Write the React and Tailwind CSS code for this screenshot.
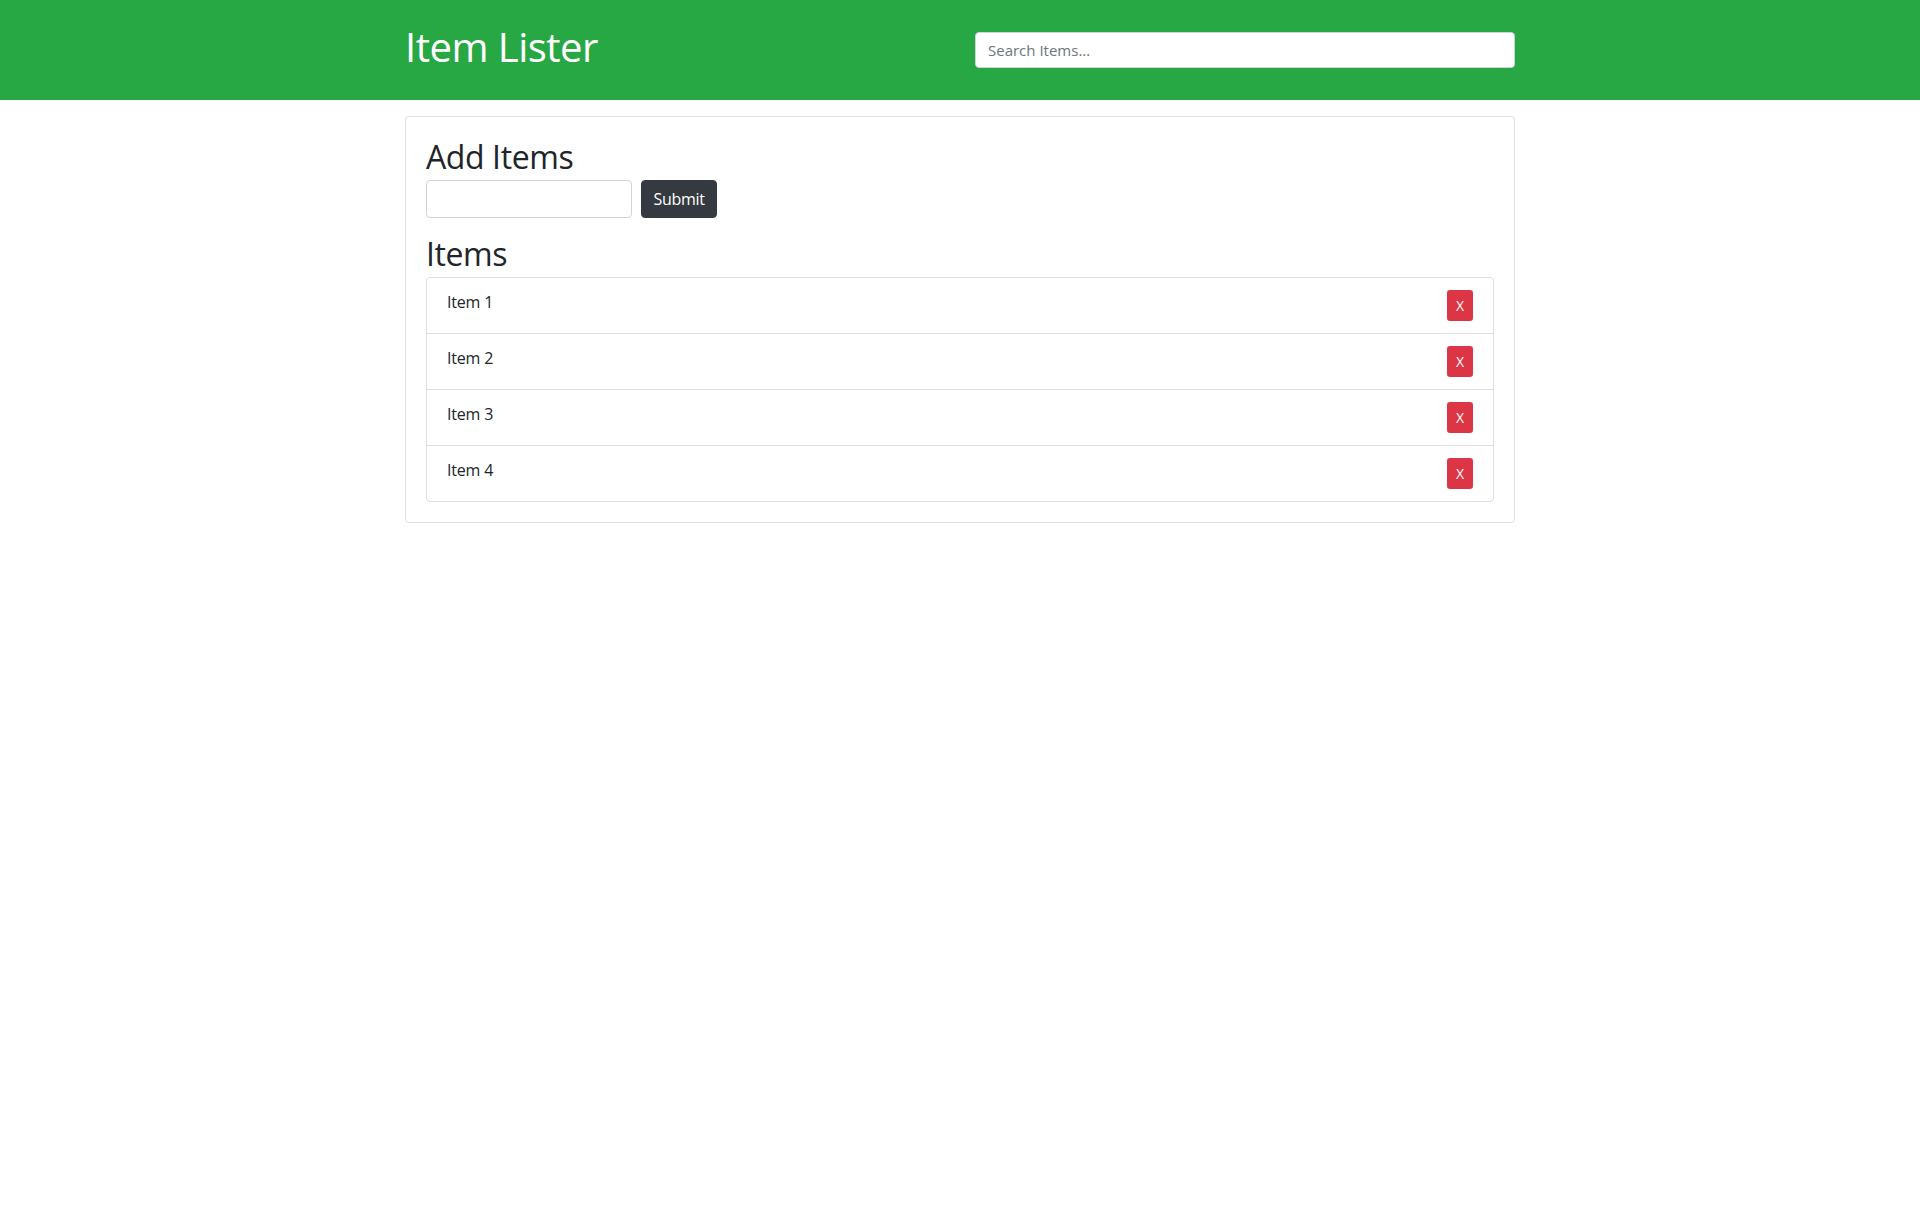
import React from "react";

const items = ["Item 1", "Item 2", "Item 3", "Item 4"];

export default function App() {
  return (
    <div className="min-h-screen bg-white text-[#212529] font-['Open_Sans',_'Noto_Sans',_sans-serif]">
      <header className="bg-[#28a745] text-white h-[100px] mb-4">
        <div className="mx-auto max-w-[1140px] px-[15px] h-full">
          <div className="grid grid-cols-2 gap-[30px] items-center h-full">
            <h1 className="text-[40px] leading-[48px] pb-[6px] font-medium tracking-[-0.5px]">Item Lister</h1>
            <div>
              <input
                type="text"
                placeholder="Search Items..."
                className="block w-full h-[36px] px-3 text-[15px] bg-white text-[#495057] border border-[#ced4da] rounded-[4px] placeholder:text-[#6c757d] outline-none"
              />
            </div>
          </div>
        </div>
      </header>
      <div className="mx-auto max-w-[1140px] px-[15px]">
        <div className="border border-[#dfdfdf] rounded-[4px] px-5 pt-[21px] pb-5">
          <h2 className="text-[32px] leading-[38px] font-medium mb-[4px] tracking-[-0.4px]">Add Items</h2>
          <form className="flex items-center gap-[9px] mb-4" onSubmit={(e) => e.preventDefault()}>
            <input
              type="text"
              className="w-[206px] h-[38px] px-3 text-base border border-[#ced4da] rounded-[4px] outline-none"
            />
            <button
              type="submit"
              className="w-[76px] h-[38px] bg-[#343a40] border border-[#343a40] text-white text-base rounded-[4px] tracking-[-0.3px]"
            >
              Submit
            </button>
          </form>
          <h2 className="text-[32px] leading-[38px] font-medium pt-[1px] mb-[4px] tracking-[-0.4px]">Items</h2>
          <ul className="border border-[#dfdfdf] rounded-[4px]">
            {items.map((it, i) => (
              <li
                key={it}
                className={
                  "flex items-start justify-between px-5 py-3 " +
                  (i < items.length - 1 ? "border-b border-[#dfdfdf]" : "")
                }
              >
                <span className="text-base leading-6 tracking-[-0.2px]">{it}</span>
                <button className="w-[26px] h-[31px] bg-[#dc3545] text-white text-sm leading-[21px] rounded-[3px]">
                  X
                </button>
              </li>
            ))}
          </ul>
        </div>
      </div>
    </div>
  );
}
